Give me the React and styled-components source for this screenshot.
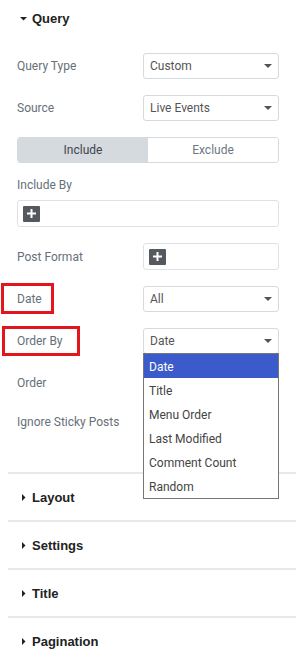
import React from "react";
import styled, { createGlobalStyle } from "styled-components";

const Global = createGlobalStyle`
  html, body { margin: 0; padding: 0; background: #fff; }
  body { font-family: Roboto, "Liberation Sans", Arial, sans-serif; }
  * { box-sizing: border-box; }
`;

const Panel = styled.div`
  width: 296px;
  padding-left: 8px;
  background: #fff;
  overflow: hidden;
`;

const Section = styled.section`
  border-top: ${(p) => (p.$first ? "none" : "2px solid #e6e9ec")};
`;

const SectionHeader = styled.div`
  height: ${(p) => (p.$open ? "36px" : "46px")};
  display: flex;
  align-items: center;
  gap: 5px;
  padding-left: 12px;
  font-family: "Liberation Sans", Arial, sans-serif;
  font-weight: 700;
  font-size: 13px;
  color: #222;
`;

const Arrow = styled.svg`
  width: 7px;
  height: 7px;
  flex: none;
  fill: #222;
`;

const Controls = styled.div`
  display: flex;
  flex-direction: column;
  gap: 16px;
  padding: 17px 17px 40px 9px;
`;

const Row = styled.div`
  display: grid;
  grid-template-columns: 126px 1fr;
  align-items: center;
  min-height: ${(p) => p.$h || "26px"};
`;

const Label = styled.span`
  position: relative;
  justify-self: start;
  font-size: 12px;
  line-height: 14px;
  color: #66707a;
`;

const Highlight = styled(Label)`
  &::after {
    content: "";
    position: absolute;
    inset: ${(p) => p.$inset};
    border: 3px solid #e2161c;
    pointer-events: none;
  }
`;

const SelectBox = styled.div`
  position: relative;
  height: 26px;
  display: flex;
  align-items: center;
  justify-content: space-between;
  padding: 0 6px 0 6px;
  border: 1px solid #d5dadf;
  border-radius: 3px;
  background: #fff;
  font-size: 12px;
  color: #555;
`;

const Caret = styled.span`
  margin-left: auto;
  width: 0;
  height: 0;
  border-left: 4px solid transparent;
  border-right: 4px solid transparent;
  border-top: 4px solid #555;
`;

const Toggle = styled.div`
  display: grid;
  grid-template-columns: 1fr 1fr;
  height: 26px;
  border: 1px solid #d5dadf;
  border-radius: 3px;
  overflow: hidden;
`;

const ToggleOption = styled.div`
  display: flex;
  align-items: center;
  justify-content: center;
  font-size: 12px;
  background: ${(p) => (p.$active ? "#d5dadf" : "#fff")};
  color: ${(p) => (p.$active ? "#3f454b" : "#6d7882")};
`;

const Stack = styled.div`
  display: flex;
  flex-direction: column;
  gap: 9px;
`;

const StackLabel = styled.span`
  font-size: 12px;
  line-height: 12px;
  color: #66707a;
`;

const AddField = styled.div`
  height: 27px;
  display: flex;
  align-items: center;
  padding-left: 5px;
  border: 1px solid #dfe2e5;
  border-radius: 3px;
  background: #fff;
`;

const PlusButton = styled.span`
  width: 17px;
  height: 16px;
  border-radius: 1px;
  background: #54595f;
  display: flex;
  align-items: center;
  justify-content: center;
`;

const Switch = styled.span`
  justify-self: end;
  width: 36px;
  height: 20px;
  border-radius: 10px;
  background: #d5dadf;
`;

const Dropdown = styled.ul`
  position: absolute;
  top: 100%;
  left: -1px;
  right: -1px;
  z-index: 10;
  margin: 0;
  padding: 0;
  list-style: none;
  border: 1px solid #767676;
  background: #fff;
`;

const Option = styled.li`
  height: 24px;
  display: flex;
  align-items: center;
  padding-left: 5px;
  padding-top: 1px;
  font-size: 12px;
  color: ${(p) => (p.$selected ? "#fff" : "#444")};
  background: ${(p) => (p.$selected ? "#3b5bcb" : "#fff")};
`;

const Plus = () => (
  <svg width="9" height="9" viewBox="0 0 9 9">
    <path d="M3.5 0h2v3.5H9v2H5.5V9h-2V5.5H0v-2h3.5z" fill="#fff" />
  </svg>
);

const Select = ({ value, children }) => (
  <SelectBox>
    {value && <span>{value}</span>}
    <Caret />
    {children}
  </SelectBox>
);

const Header = ({ title, open }) => (
  <SectionHeader $open={open}>
    <Arrow viewBox="0 0 7 7">
      {open ? <path d="M0 2h7L3.5 5.5z" /> : <path d="M2 0l3.5 3.5L2 7z" />}
    </Arrow>
    {title}
  </SectionHeader>
);

const options = ["Date", "Title", "Menu Order", "Last Modified", "Comment Count", "Random"];

export default function App() {
  return (
    <>
      <Global />
      <Panel>
        <Section $first>
          <Header title="Query" open />
          <Controls>
            <Row>
              <Label>Query Type</Label>
              <Select value="Custom" />
            </Row>
            <Row>
              <Label>Source</Label>
              <Select value="Live Events" />
            </Row>
            <Toggle>
              <ToggleOption $active>Include</ToggleOption>
              <ToggleOption>Exclude</ToggleOption>
            </Toggle>
            <Stack>
              <StackLabel>Include By</StackLabel>
              <AddField>
                <PlusButton><Plus /></PlusButton>
              </AddField>
            </Stack>
            <Row $h="27px">
              <Label>Post Format</Label>
              <AddField>
                <PlusButton><Plus /></PlusButton>
              </AddField>
            </Row>
            <Row>
              <Highlight $inset="-9px -12px -8px -16px">Date</Highlight>
              <Select value="All" />
            </Row>
            <Row>
              <Highlight $inset="-8px -17px -8px -15px">Order By</Highlight>
              <Select value="Date">
                <Dropdown>
                  {options.map((o, i) => (
                    <Option key={o} $selected={i === 0}>{o}</Option>
                  ))}
                </Dropdown>
              </Select>
            </Row>
            <Row>
              <Label>Order</Label>
              <Select />
            </Row>
            <Row $h="20px">
              <Label>Ignore Sticky Posts</Label>
              <Switch />
            </Row>
          </Controls>
        </Section>
        <Section><Header title="Layout" /></Section>
        <Section><Header title="Settings" /></Section>
        <Section><Header title="Title" /></Section>
        <Section><Header title="Pagination" /></Section>
      </Panel>
    </>
  );
}
